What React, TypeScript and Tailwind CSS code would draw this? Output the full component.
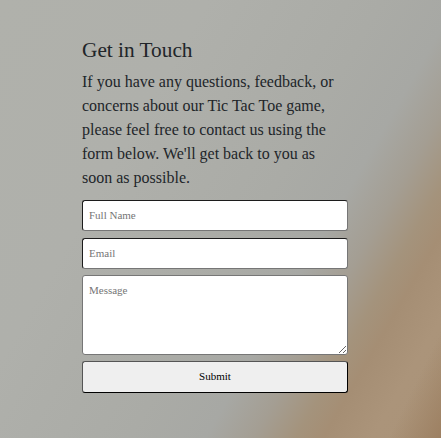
import React from "react";

const field =
  "block w-full rounded-[3px] border bg-white px-1.5 text-[11px] text-black outline-none placeholder:text-[#757575] placeholder:opacity-100";

export default function App() {
  return (
    <main className="h-[438px] w-[441px] overflow-hidden bg-[linear-gradient(116deg,#9d806200_92%,#9d8062_100%),linear-gradient(120deg,#b0b1ab_0%,#afb0ab_30%,#aaaba6_55%,#a7a8a4_66%,#a49e93_73%,#a4937c_79%,#a58e74_83%,#ab947a_90%,#aa9378_100%)] pt-[38px] pl-[82px] font-['Liberation_Serif',serif] text-[#212529]">
      <section className="w-[266px]">
        <h2 className="text-[21.3px] leading-6">Get in Touch</h2>
        <p className="mt-2 text-base leading-6">
          If you have any questions, feedback, or concerns about our Tic Tac Toe game, please feel free to contact us using the form below. We'll get back to you as soon as possible.
        </p>
        <form className="mt-2.5" onSubmit={(e) => e.preventDefault()}>
          <input
            type="text"
            placeholder="Full Name"
            className={field + " h-[31px] border-t-[#1c1c1c] border-r-[#767676] border-b-[#767676] border-l-[#1c1c1c] pb-0.5"}
          />
          <input
            type="email"
            placeholder="Email"
            className={field + " mt-[7px] h-[31px] border-t-[#1c1c1c] border-r-[#767676] border-b-[#767676] border-l-[#1c1c1c] pb-0.5"}
          />
          <textarea
            placeholder="Message"
            className={field + " mt-1.5 h-20 resize-y border-[#767676] pt-1.5 leading-[17px]"}
          />
          <button
            type="submit"
            className="mt-1.5 block h-8 w-full rounded-[3px] border border-t-[#555] border-r-black border-b-black border-l-[#555] bg-[#efefef] pb-px text-[11px] text-black"
          >
            Submit
          </button>
        </form>
      </section>
    </main>
  );
}
